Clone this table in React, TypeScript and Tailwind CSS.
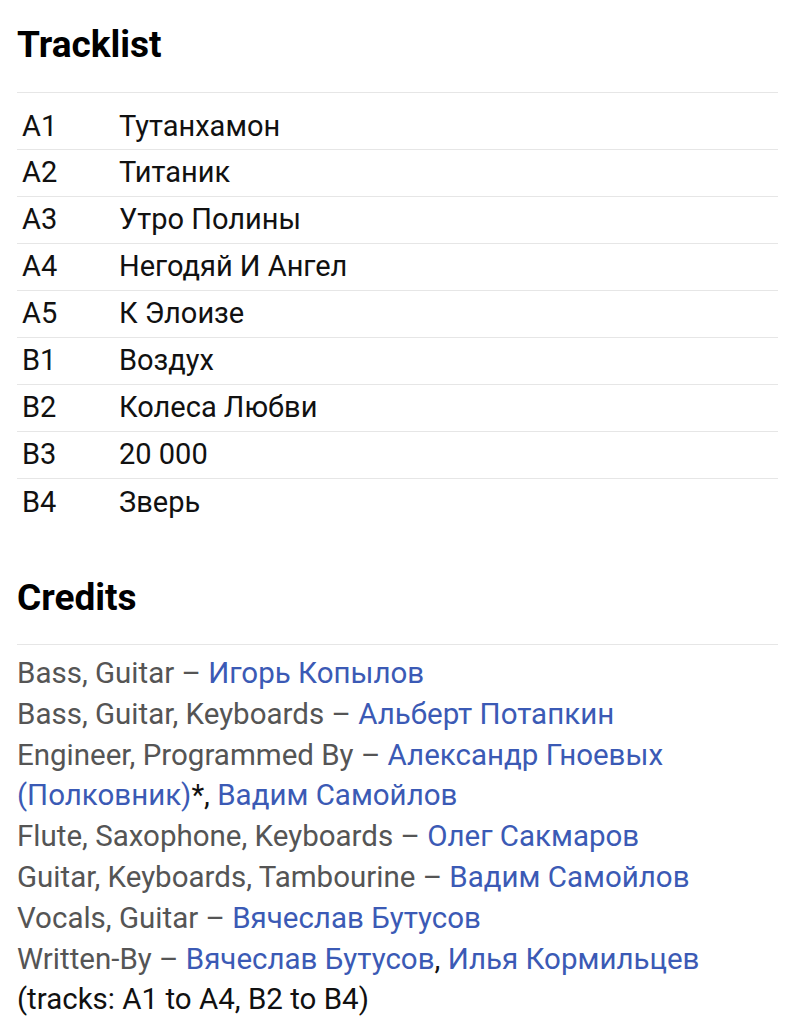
import React from "react";

const tracks: [string, string][] = [
  ["A1", "Тутанхамон"],
  ["A2", "Титаник"],
  ["A3", "Утро Полины"],
  ["A4", "Негодяй И Ангел"],
  ["A5", "К Элоизе"],
  ["B1", "Воздух"],
  ["B2", "Колеса Любви"],
  ["B3", "20 000"],
  ["B4", "Зверь"],
];

function L({ children }: { children: React.ReactNode }) {
  return <a className="text-[#3b5ab5]">{children}</a>;
}

function Role({ children }: { children: React.ReactNode }) {
  return <span className="text-[#555555]">{children}</span>;
}

export default function App() {
  return (
    <div
      className="bg-white w-[794px] h-[1024px] overflow-hidden pl-[17px] pr-[16px] text-[#111111]"
      style={{ fontFamily: "Roboto, 'Noto Sans', sans-serif" }}
    >
      <h2 className="pt-[25px] text-[37px] leading-[40px] font-bold text-black">Tracklist</h2>
      <div className="mt-[27px] border-t border-[#e6e6e6]">
        {tracks.map(([pos, title], i) => (
          <div
            key={pos}
            className={`flex items-center text-[29px] ${
              i === 0 ? "h-[57px] pt-[11px]" : "h-[47px]"
            } ${i < tracks.length - 1 ? "border-b border-[#e6e6e6]" : ""}`}
          >
            <div className="w-[102px] pl-[5px]">{pos}</div>
            <div>{title}</div>
          </div>
        ))}
      </div>
      <h2 className="mt-[52px] text-[37px] leading-[40px] font-bold text-black">Credits</h2>
      <div className="mt-[26px] border-t border-[#e6e6e6] pt-[8px] text-[29.5px] leading-[40.8px]">
        <div>
          <Role>Bass, Guitar – </Role>
          <L>Игорь Копылов</L>
        </div>
        <div>
          <Role>Bass, Guitar, Keyboards – </Role>
          <L>Альберт Потапкин</L>
        </div>
        <div>
          <Role>Engineer, Programmed By – </Role>
          <L>Александр Гноевых (Полковник)</L>*, <L>Вадим Самойлов</L>
        </div>
        <div>
          <Role>Flute, Saxophone, Keyboards – </Role>
          <L>Олег Сакмаров</L>
        </div>
        <div>
          <Role>Guitar, Keyboards, Tambourine – </Role>
          <L>Вадим Самойлов</L>
        </div>
        <div>
          <Role>Vocals, Guitar – </Role>
          <L>Вячеслав Бутусов</L>
        </div>
        <div>
          <Role>Written-By – </Role>
          <L>Вячеслав Бутусов</L>, <L>Илья Кормильцев</L> (tracks: A1 to A4, B2 to B4)
        </div>
      </div>
    </div>
  );
}
